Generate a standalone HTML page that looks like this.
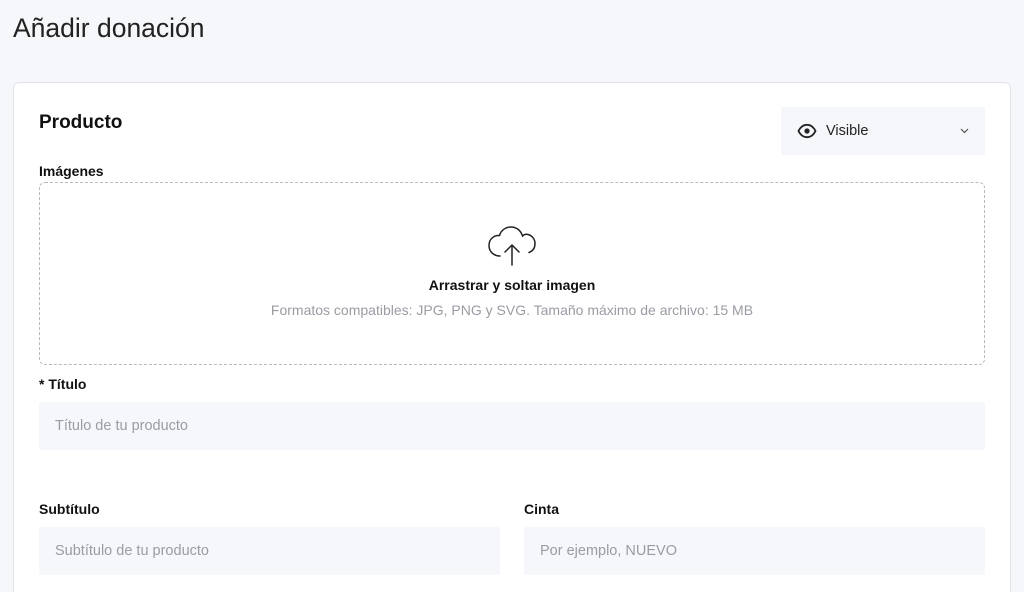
<!DOCTYPE html>
<html><head><meta charset="utf-8"><style>
*{box-sizing:border-box;margin:0;padding:0}
html,body{width:1024px;height:592px;overflow:hidden}
body{background:#f6f7fb;font-family:"Liberation Sans",sans-serif;position:relative;color:#111}
.abs{position:absolute}
h1{position:absolute;left:13px;top:13px;font-size:26.5px;font-weight:400;color:#222}
.card{position:absolute;left:13px;top:82px;width:998px;height:520px;background:#fff;border:1px solid #e2e3e8;border-radius:6px}
.lbl{position:absolute;font-size:14px;font-weight:700;color:#111}
.inp{position:absolute;background:#f6f7fb;border-radius:2px;font-size:14.5px;color:#9a9ca3;padding-left:16px;line-height:48px;height:48px}
</style></head><body>
<h1>Añadir donación</h1>
<div class="card"></div>
<div class="abs" style="left:39px;top:112px;font-size:19px;font-weight:700">Producto</div>
<div class="abs" style="left:781px;top:107px;width:204px;height:48px;background:#f6f7fb">
<svg class="abs" style="left:16px;top:16px" width="20" height="16" viewBox="0 0 20 16"><path d="M1.5 8C4 3 7 1.8 10 1.8S16 3 18.5 8C16 13 13 14.2 10 14.2S4 13 1.5 8Z" fill="none" stroke="#222" stroke-width="1.8"/><circle cx="10" cy="8" r="2.6" fill="#222"/></svg>
<div class="abs" style="left:45px;top:16px;font-size:14.5px;color:#222">Visible</div>
<svg class="abs" style="left:179px;top:21px" width="9" height="6" viewBox="0 0 9 6"><path d="M1 1l3.5 3.5L8 1" fill="none" stroke="#555" stroke-width="1.2"/></svg>
</div>
<div class="lbl" style="left:39px;top:163px">Imágenes</div>
<div class="abs" style="left:39px;top:182px;width:946px;height:183px;border:1px dashed #b8b9be;border-radius:6px"></div>
<svg class="abs" style="left:486px;top:225px" width="52" height="42" viewBox="0 0 52 42"><path d="M14 31C8 31 3 27 3 20.5C3 14 8 10 13.5 10.5C15 5 20 2 25 2C31 2 35 6 36.5 11C38 9.5 40 9 42 9.5C46 10.5 49 14 49 18.5C49 22.5 47 26 43 27.5" fill="none" stroke="#222" stroke-width="1.5" stroke-linecap="round"/><path d="M26 40V20M19 27l7-7 7 7" fill="none" stroke="#222" stroke-width="1.5" stroke-linecap="round" stroke-linejoin="round"/></svg>
<div class="abs" style="left:0;width:1024px;text-align:center;top:277px;font-size:14px;font-weight:700">Arrastrar y soltar imagen</div>
<div class="abs" style="left:0;width:1024px;text-align:center;top:302px;font-size:14px;color:#9a9ca3">Formatos compatibles: JPG, PNG y SVG. Tamaño máximo de archivo: 15 MB</div>
<div class="lbl" style="left:39px;top:376px">* Título</div>
<div class="inp" style="left:39px;top:402px;width:946px">Título de tu producto</div>
<div class="lbl" style="left:39px;top:501px">Subtítulo</div>
<div class="inp" style="left:39px;top:527px;width:461px">Subtítulo de tu producto</div>
<div class="lbl" style="left:524px;top:501px">Cinta</div>
<div class="inp" style="left:524px;top:527px;width:461px">Por ejemplo, NUEVO</div>
</body></html>
